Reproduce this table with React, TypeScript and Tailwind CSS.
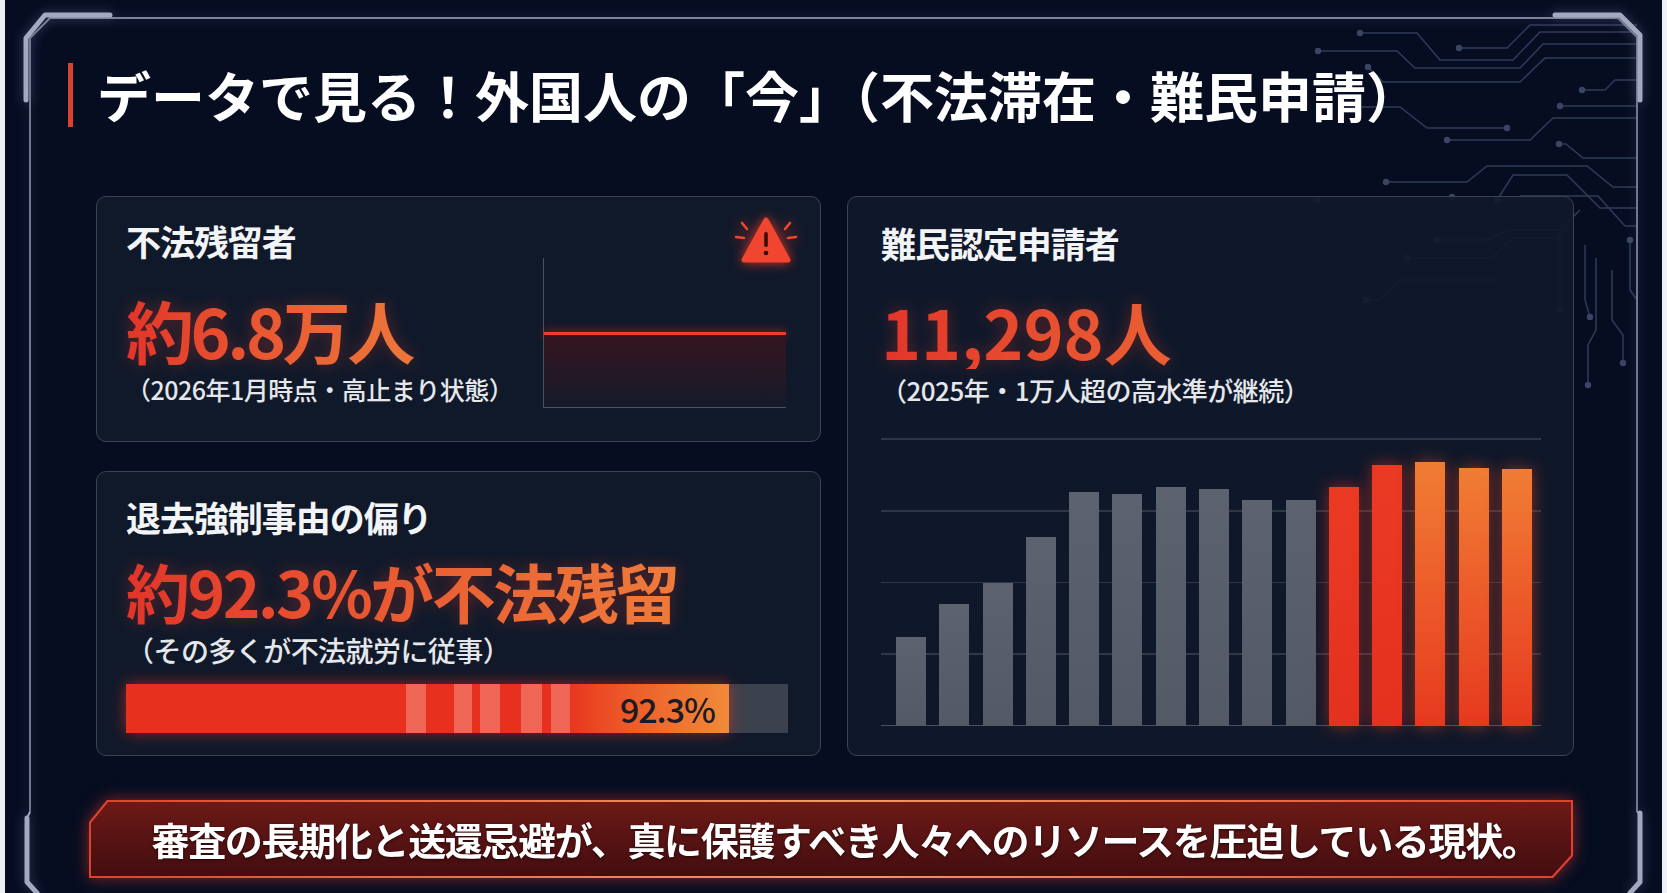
import React from "react";

const bars = [89, 122, 143, 189, 234, 232, 239, 237, 226, 226, 239, 261, 264, 258, 257];

function barClass(i: number) {
  if (i < 10) return "w-[30px] bg-linear-to-b from-[#5d636e] to-[#535965]";
  if (i < 12) return "w-[30px] bg-linear-to-b from-[#ea3a24] to-[#e5311f] shadow-[0_0_16px_rgba(240,55,30,0.55)]";
  return "w-[30px] bg-linear-to-b from-[#f07d34] via-[#ec5a2a] to-[#e6381f] shadow-[0_0_16px_rgba(240,70,30,0.55)]";
}

function WarningIcon() {
  return (
    <svg width="64" height="50" viewBox="0 0 64 50" className="[filter:drop-shadow(0_0_6px_rgba(255,60,40,0.85))]">
      <g stroke="#f0452f" strokeWidth="2.6" strokeLinecap="round">
        <line x1="8" y1="8" x2="13" y2="14" />
        <line x1="2" y1="22" x2="10" y2="23" />
        <line x1="56" y1="8" x2="51" y2="14" />
        <line x1="62" y1="22" x2="54" y2="23" />
      </g>
      <path d="M32 5 L54 45 L10 45 Z" fill="#f0452f" stroke="#f0452f" strokeWidth="5" strokeLinejoin="round" />
      <rect x="30.2" y="17" width="3.6" height="15" rx="1.8" fill="#3a0c0c" />
      <circle cx="32" cy="38" r="2.3" fill="#3a0c0c" />
    </svg>
  );
}

function Frame() {
  return (
    <svg
      width="1667"
      height="893"
      viewBox="0 0 1667 893"
      className="pointer-events-none absolute left-0 top-0 [filter:drop-shadow(0_0_6px_rgba(150,160,210,0.35))]"
    >
      <path
        d="M30 812 L30 38 L50 18 L1618 18 L1637 37 L1637 812"
        fill="none"
        stroke="#7c8299"
        strokeWidth="1.8"
      />
      <g fill="none" stroke="#a3a9be" strokeWidth="5" strokeLinecap="round" strokeLinejoin="round">
        <path d="M26 100 L26 38 L45 15 L110 15" />
        <path d="M1555 15 L1620 15 L1640 35 L1640 100" />
        <path d="M27 818 L27 882 L37 893" />
        <path d="M1640 813 L1640 882 L1630 893" />
      </g>
      <path d="M30 812 L27 818 M1637 812 L1640 813" stroke="#a3a9be" strokeWidth="2" />
    </svg>
  );
}

function Circuit() {
  const lines = [
    "M1360 33 L1417 33 L1440 60 L1513 60 L1540 32 L1637 32",
    "M1318 51 L1397 51 L1415 68 L1520 68 L1543 44 L1637 44",
    "M1459 48 L1507 48 L1530 25 L1637 25",
    "M1368 67 L1383 82 L1520 82 L1545 58 L1637 58",
    "M1507 128 L1427 128 L1400 107 L1340 107",
    "M1447 140 L1530 140 L1553 118 L1637 118",
    "M1582 90 L1605 90 L1615 80 L1637 80",
    "M1560 106 L1637 106",
    "M1559 144 L1566 144 L1583 158 L1637 158",
    "M1386 182 L1467 182 L1487 166 L1587 166 L1613 187 L1637 187",
    "M1497 200 L1513 175 L1567 175 L1600 208 L1637 208",
    "M1520 196 L1598 196 L1625 226 L1637 226",
    "M1437 240 L1487 240 L1507 230 L1560 230 L1580 210",
    "M1407 258 L1492 258 L1513 238 L1556 238 L1570 226",
    "M1366 300 L1380 300 L1400 280 L1500 280",
    "M1585 245 L1585 300 L1590 317",
    "M1596 258 L1596 330 L1588 345 L1588 385",
    "M1612 270 L1612 320 L1623 335 L1623 363",
    "M1630 240 L1630 290 L1637 300",
    "M1560 230 L1560 310",
  ];
  const dots = [
    [1360, 33], [1318, 51], [1459, 48], [1368, 67], [1507, 128], [1447, 140],
    [1582, 90], [1560, 106], [1559, 144], [1386, 182], [1497, 200], [1437, 240],
    [1407, 258], [1366, 300], [1590, 317], [1588, 385], [1623, 363], [1630, 240],
    [1560, 310], [1452, 197], [1318, 200],
  ];
  return (
    <svg width="1667" height="893" viewBox="0 0 1667 893" className="pointer-events-none absolute left-0 top-0">
      <g fill="none" stroke="#2f3b5b" strokeWidth="1.5">
        {lines.map((d, i) => (
          <path key={i} d={d} />
        ))}
      </g>
      <g fill="#3a4563">
        {dots.map(([x, y], i) => (
          <circle key={i} cx={x} cy={y} r="3.2" />
        ))}
      </g>
    </svg>
  );
}

const bigBase =
  "self-start bg-linear-to-r from-[#e3342a] to-[#ef8a40] bg-clip-text font-bold leading-[1.1] text-transparent [filter:drop-shadow(0_0_8px_rgba(230,60,40,0.35))]";

const bigSizes = {
  lg: "text-[68px] tracking-[-0.05em]",
  md: "text-[64px] tracking-[-0.04em]",
  wide: "text-[68px] tracking-normal",
};

function BigNumber({ children, size }: { children: React.ReactNode; size: "lg" | "md" | "wide" }) {
  return <div className={bigBase + " " + bigSizes[size]}>{children}</div>;
}

function ProgressBar() {
  return (
    <div className="mt-[18px] flex h-[49px] w-[662px] bg-[#3c424d]">
      <div className="relative flex h-full w-[603px] shadow-[0_0_14px_rgba(239,50,30,0.6)]">
        <div className="w-[280px] bg-[#e8301e]" />
        <div className="w-[20px] bg-[#ef6556]" />
        <div className="w-[28px] bg-[#e8301e]" />
        <div className="w-[18px] bg-[#ef6556]" />
        <div className="w-[8px] bg-[#e8301e]" />
        <div className="w-[20px] bg-[#ef6556]" />
        <div className="w-[21px] bg-[#e8301e]" />
        <div className="w-[21px] bg-[#ef6556]" />
        <div className="w-[9px] bg-[#e8301e]" />
        <div className="w-[19px] bg-[#ef6556]" />
        <div className="flex-1 bg-linear-to-r from-[#e8361f] to-[#f08a3a]" />
        <span className="absolute right-[14px] top-0 flex h-full items-center text-[34px] font-medium tracking-[-0.03em] text-[#1c1a22]">
          92.3%
        </span>
      </div>
    </div>
  );
}

export default function App() {
  return (
    <div className="relative flex h-[893px] w-[1667px] overflow-hidden bg-[#060d21] font-['Noto_Sans_CJK_JP','Noto_Sans',sans-serif]">
      <Circuit />
      <Frame />
      <div className="relative w-[5px] shrink-0 bg-[#eef0f4]" />
      <div className="relative flex flex-1 flex-col">
        <div className="mt-[61px] flex h-[67px] items-center gap-[24px] pl-[63px]">
          <div className="h-[64px] w-[5px] bg-[#d8432f]" />
          <h1 className="text-[54px] font-bold leading-none tracking-normal text-white">
            データで見る！外国人の「今」（不法滞在・難民申請）
          </h1>
        </div>

        <div className="mt-[68px] grid h-[560px] grid-cols-[725px_727px] gap-[26px] pl-[91px]">
          <div className="flex flex-col gap-[29px]">
            <div className="relative flex h-[246px] rounded-[10px] border-[1.5px] border-[#3a4253] bg-[#111a2b]/95">
              <div className="flex flex-col pl-[29px] pt-[26px]">
                <div className="text-[35px] font-bold leading-none tracking-[-0.03em] text-[#f3f4f6]">不法残留者</div>
                <div className="mt-[35px]">
                  <BigNumber size="lg">約6.8万人</BigNumber>
                </div>
                <div className="mt-[8px] text-[25px] font-medium leading-[1.1] tracking-[-0.02em] text-[#e5e7eb]">
                  （2026年1月時点・高止まり状態）
                </div>
              </div>
              <div className="mb-[33px] ml-auto mr-[34px] mt-[61px] flex w-[243px] flex-col border-b-[1.5px] border-l-[1.5px] border-[#4a5162]">
                <div className="h-[74px]" />
                <div className="h-[3px] bg-[#f03b2e] shadow-[0_0_10px_rgba(255,50,40,0.9)]" />
                <div className="flex-1 bg-linear-to-b from-[#341420] to-[#141a2a]" />
              </div>
              <div className="absolute right-[22px] top-[18px]">
                <WarningIcon />
              </div>
            </div>

            <div className="flex flex-1 flex-col rounded-[10px] border-[1.5px] border-[#3a4253] bg-[#111a2b]/95 pl-[29px] pt-[27px]">
              <div className="text-[35px] font-bold leading-none tracking-[-0.03em] text-[#f3f4f6]">退去強制事由の偏り</div>
              <div className="mt-[21px]">
                <BigNumber size="md">約92.3%が不法残留</BigNumber>
              </div>
              <div className="mt-[10px] text-[28px] font-medium leading-[1.1] tracking-[-0.02em] text-[#e5e7eb]">
                （その多くが不法就労に従事）
              </div>
              <ProgressBar />
            </div>
          </div>

          <div className="flex flex-col rounded-[10px] border-[1.5px] border-[#3a4253] bg-[#111a2b]/90 pl-[33px] pr-[32px] pt-[28px]">
            <div className="text-[35px] font-bold leading-none tracking-[-0.03em] text-[#f3f4f6]">難民認定申請者</div>
            <div className="mt-[34px]">
              <BigNumber size="wide">11,298人</BigNumber>
            </div>
            <div className="mt-[7px] text-[26px] font-medium leading-[1.1] tracking-[-0.02em] text-[#e5e7eb]">
              （2025年・1万人超の高水準が継続）
            </div>
            <div className="relative mt-[34px] h-[288px]">
              <div className="absolute inset-0 flex flex-col justify-between">
                <div className="h-[1.5px] bg-[#2e3648]" />
                <div className="h-[1.5px] bg-[#2e3648]" />
                <div className="h-[1.5px] bg-[#2e3648]" />
                <div className="h-[1.5px] bg-[#2e3648]" />
                <div className="h-[1.5px] bg-[#4a5163]" />
              </div>
              <div className="relative flex h-full items-end justify-between pl-[15px] pr-[9px]">
                {bars.map((h, i) => (
                  <div key={i} className={barClass(i)} style={{ height: h }} />
                ))}
              </div>
            </div>
          </div>
        </div>

        <div className="ml-[84px] mt-[44px] w-[1484px] [filter:drop-shadow(0_0_8px_rgba(240,60,40,0.55))]">
          <div className="h-[78px] bg-linear-to-r from-[#e0402c] via-[#f29a62] to-[#e0402c] p-[2px] [clip-path:polygon(18px_0,100%_0,100%_calc(100%-22px),calc(100%-20px)_100%,0_100%,0_22px)]">
            <div className="flex h-full items-center justify-center bg-linear-to-b from-[#6c1a16] to-[#440d10] pl-[28px] [clip-path:polygon(17px_0,100%_0,100%_calc(100%-21px),calc(100%-19px)_100%,0_100%,0_21px)]">
              <span className="text-[38px] font-bold leading-none tracking-[-0.035em] text-white [text-shadow:0_1px_3px_rgba(0,0,0,0.6)]">
                審査の長期化と送還忌避が、真に保護すべき人々へのリソースを圧迫している現状。
              </span>
            </div>
          </div>
        </div>
      </div>
      <div className="relative w-[5px] shrink-0 bg-[#eef0f4]" />
    </div>
  );
}
